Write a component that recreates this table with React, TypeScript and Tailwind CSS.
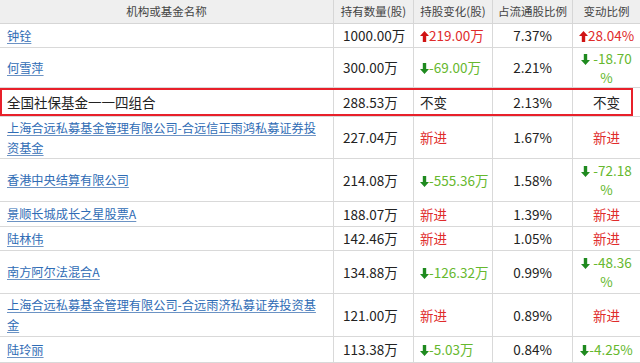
import React from 'react';

type Change =
  | { kind: 'up'; text: string }
  | { kind: 'down'; text: string; wrap?: string }
  | { kind: 'new' }
  | { kind: 'same' };

interface Holder {
  name: string;
  link: boolean;
  shares: string;
  change: Change;
  ratio: string;
  pct: Change;
  h: string;
  boxed?: boolean;
}

const holders: Holder[] = [
  { name: '钟铨', link: true, shares: '1000.00万', change: { kind: 'up', text: '219.00万' }, ratio: '7.37%', pct: { kind: 'up', text: '28.04%' }, h: 'h-[24px]' },
  { name: '何雪萍', link: true, shares: '300.00万', change: { kind: 'down', text: '-69.00万' }, ratio: '2.21%', pct: { kind: 'down', text: '-18.70', wrap: '%' }, h: 'h-[40px]' },
  { name: '全国社保基金一一四组合', link: false, shares: '288.53万', change: { kind: 'same' }, ratio: '2.13%', pct: { kind: 'same' }, h: 'h-[29px]', boxed: true },
  { name: '上海合远私募基金管理有限公司-合远信正雨鸿私募证券投资基金', link: true, shares: '227.04万', change: { kind: 'new' }, ratio: '1.67%', pct: { kind: 'new' }, h: 'h-[42px]' },
  { name: '香港中央结算有限公司', link: true, shares: '214.08万', change: { kind: 'down', text: '-555.36万' }, ratio: '1.58%', pct: { kind: 'down', text: '-72.18', wrap: '%' }, h: 'h-[43px]' },
  { name: '景顺长城成长之星股票A', link: true, shares: '188.07万', change: { kind: 'new' }, ratio: '1.39%', pct: { kind: 'new' }, h: 'h-[25px]' },
  { name: '陆林伟', link: true, shares: '142.46万', change: { kind: 'new' }, ratio: '1.05%', pct: { kind: 'new' }, h: 'h-[24px]' },
  { name: '南方阿尔法混合A', link: true, shares: '134.88万', change: { kind: 'down', text: '-126.32万' }, ratio: '0.99%', pct: { kind: 'down', text: '-48.36', wrap: '%' }, h: 'h-[43px]' },
  { name: '上海合远私募基金管理有限公司-合远雨济私募证券投资基金', link: true, shares: '121.00万', change: { kind: 'new' }, ratio: '0.89%', pct: { kind: 'new' }, h: 'h-[43px]' },
  { name: '陆玲丽', link: true, shares: '113.38万', change: { kind: 'down', text: '-5.03万' }, ratio: '0.84%', pct: { kind: 'down', text: '-4.25%' }, h: 'h-[26px]' },
];

function UpArrow() {
  return (
    <svg width="9" height="11" viewBox="0 0 9 11" className="inline-block align-[-1px]">
      <path d="M4.5 0 L9 5 L6.2 5 L6.2 11 L2.8 11 L2.8 5 L0 5 Z" fill="#d01414" />
    </svg>
  );
}

function DownArrow() {
  return (
    <svg width="9" height="11" viewBox="0 0 9 11" className="inline-block align-[-1px]">
      <path d="M4.5 11 L9 6 L6.2 6 L6.2 0 L2.8 0 L2.8 6 L0 6 Z" fill="#1f8a1f" />
    </svg>
  );
}

function ChangeCell({ c }: { c: Change }) {
  if (c.kind === 'up') {
    return (
      <span className="text-[#e02b2b]">
        <UpArrow />
        {c.text}
      </span>
    );
  }
  if (c.kind === 'down') {
    return (
      <span className="text-[#66b82e]">
        <DownArrow />
        {c.text}
      </span>
    );
  }
  if (c.kind === 'new') return <span className="text-[#e02b2b]">新进</span>;
  return <span className="text-[#222]">不变</span>;
}

function PctCell({ c }: { c: Change }) {
  if (c.kind === 'down' && c.wrap) {
    return (
      <div className="flex flex-col items-center leading-[19px] text-[#66b82e]">
        <span>
          <DownArrow /> {c.text}
        </span>
        <span>{c.wrap}</span>
      </div>
    );
  }
  return <ChangeCell c={c} />;
}

const cols = 'grid grid-cols-[333px_80px_79px_80px_68px]';

export default function App() {
  return (
    <div className="w-[640px] h-[363px] overflow-hidden bg-white text-[13.5px] text-[#222] font-['Noto_Sans_CJK_SC','Noto_Sans',sans-serif]">
      <div className={`${cols} h-[24px] bg-[#efefef] border-b border-[#d6d6d6] text-[11.5px] text-[#444]`}>
        <div className="flex items-center justify-center">机构或基金名称</div>
        <div className="flex items-center justify-center border-l border-[#d6d6d6]">持有数量(股)</div>
        <div className="flex items-center justify-center border-l border-[#d6d6d6]">持股变化(股)</div>
        <div className="flex items-center justify-center border-l border-[#d6d6d6]">占流通股比例</div>
        <div className="flex items-center justify-center border-l border-[#d6d6d6]">变动比例</div>
      </div>
      {holders.map((r) => (
        <div key={r.name} className={`relative ${cols} ${r.h} border-b border-[#d9d9d9]`}>
          <div className="flex items-center pl-[7px] pr-[10px]">
            {r.link ? (
              <a className="text-[12.2px] leading-[20px] text-[#2f6cb5] underline underline-offset-2 decoration-[#6c93c4]">
                {r.name}
              </a>
            ) : (
              <span>{r.name}</span>
            )}
          </div>
          <div className="flex items-center pl-[9px] border-l border-[#d9d9d9]">{r.shares}</div>
          <div className="flex items-center pl-[6px] border-l border-[#d9d9d9]">
            <ChangeCell c={r.change} />
          </div>
          <div className="flex items-center justify-center border-l border-[#d9d9d9]">{r.ratio}</div>
          <div className="flex items-center justify-center border-l border-[#d9d9d9]">
            <PctCell c={r.pct} />
          </div>
          {r.boxed && (
            <div className="absolute left-0 top-0 bottom-0 w-[633px] border-2 border-[#e8202a] pointer-events-none" />
          )}
        </div>
      ))}
    </div>
  );
}
